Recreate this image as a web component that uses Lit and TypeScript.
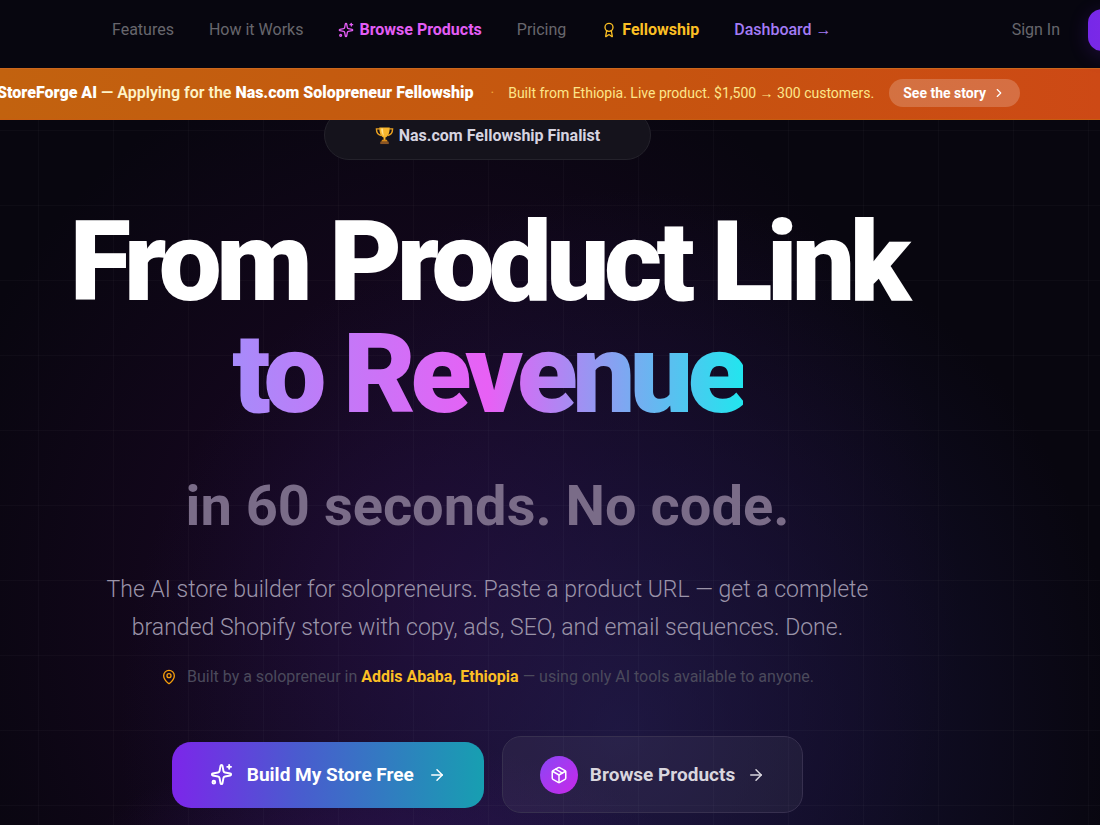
import { LitElement, html, css, svg } from "lit";
import { customElement, property } from "lit/decorators.js";

const ICONS: Record<string, unknown> = {
  sparkles: svg`<path d="M11.017 2.814a1 1 0 0 1 1.966 0l1.051 5.558a2 2 0 0 0 1.594 1.594l5.558 1.051a1 1 0 0 1 0 1.966l-5.558 1.051a2 2 0 0 0-1.594 1.594l-1.051 5.558a1 1 0 0 1-1.966 0l-1.051-5.558a2 2 0 0 0-1.594-1.594l-5.558-1.051a1 1 0 0 1 0-1.966l5.558-1.051a2 2 0 0 0 1.594-1.594z"/><path d="M20 2v4"/><path d="M22 4h-4"/><circle cx="4" cy="20" r="1.400"/>`,
  award: svg`<path d="m15.477 12.89 1.515 8.526a.5.5 0 0 1-.81.47l-3.58-2.687a1 1 0 0 0-1.197 0l-3.586 2.686a.5.5 0 0 1-.81-.469l1.514-8.526"/><circle cx="12" cy="8" r="6"/>`,
  pin: svg`<path d="M20 10c0 4.993-5.539 10.193-7.399 11.799a1 1 0 0 1-1.202 0C9.539 20.193 4 14.993 4 10a8 8 0 0 1 16 0"/><circle cx="12" cy="10" r="3"/>`,
  box: svg`<path d="M11 21.73a2 2 0 0 0 2 0l7-4A2 2 0 0 0 21 16V8a2 2 0 0 0-1-1.73l-7-4a2 2 0 0 0-2 0l-7 4A2 2 0 0 0 3 8v8a2 2 0 0 0 1 1.73z"/><path d="M12 22V12"/><polyline points="3.29 7 12 12 20.71 7"/><path d="m7.5 4.27 9 5.15"/>`,
  arrow: svg`<path d="M5 12h14"/><path d="m12 5 7 7-7 7"/>`,
  chevron: svg`<path d="m9 18 6-6-6-6"/>`,
};

@customElement("line-icon")
class LineIcon extends LitElement {
  @property() name = "";
  static styles = css`
    :host { display: inline-flex; flex: none; width: 16px; height: 16px; }
    svg {
      width: 100%; height: 100%; fill: none; stroke: currentColor;
      stroke-width: 2; stroke-linecap: round; stroke-linejoin: round;
    }
  `;
  render() {
    return html`<svg viewBox="0 0 24 24" aria-hidden="true">${ICONS[this.name]}</svg>`;
  }
}

@customElement("app-root")
class AppRoot extends LitElement {
  static styles = css`
    :host {
      display: block; min-height: 100vh; overflow: hidden;
      background: #07050f; color: #fff;
      font-family: Roboto, "Liberation Sans", sans-serif;
    }
    * { box-sizing: border-box; }
    a { color: inherit; text-decoration: none; white-space: nowrap; }
    header { position: relative; z-index: 1; background: #07060f; }

    .nav {
      display: flex; align-items: center; justify-content: space-between;
      height: 68px; padding: 0 0 8px 112px;
      font-size: 16px; line-height: 24px; color: #67666d;
    }
    .links { display: flex; align-items: center; gap: 35px; }
    .links a { display: flex; align-items: center; gap: 5px; }
    .browse { color: #e35df5; font-weight: 700; }
    .fellow { color: #fbbf24; font-weight: 700; }
    .dash { color: #a37bf5; font-weight: 500; }
    .account { display: flex; align-items: center; gap: 28px; margin-right: -120px; }
    .start {
      width: 132px; height: 42px; border: 0; border-radius: 14px;
      background: linear-gradient(90deg, #7628e8, #a32be0); color: #fff;
      box-shadow: 0 4px 20px rgba(118, 40, 232, .2);
    }

    .banner {
      display: flex; align-items: center; justify-content: flex-end;
      height: 52px; padding: 0 80px 2px 0;
      background: linear-gradient(90deg, #c2620f, #c6540f 60%, #cd4915);
      border-top: 1px solid #cb661c; border-bottom: 1px solid #c85c10;
      white-space: nowrap; color: #fde68a;
      font-size: 14px; line-height: 24px;
    }
    .lead { font-size: 16px; font-weight: 600; color: #fef3c7; }
    .lead strong { font-weight: 900; color: #fff; }
    .dot { margin: 0 14px 0 17px; color: #f0a83c; }
    .story {
      display: flex; align-items: center; gap: 6px; height: 28px;
      margin-left: 15px; padding: 0 14px; border-radius: 14px;
      background: rgba(255, 255, 255, .2); color: #fff; font-weight: 700;
    }

    .hero {
      display: flex; flex-direction: column; align-items: center;
      min-height: calc(100vh - 110px); margin-top: -10px; padding: 0 125px 12px 0;
      text-align: center;
      background:
        linear-gradient(90deg, rgba(255,255,255,.025) 1px, transparent 1px) 38px 0 / 75px 75px,
        linear-gradient(rgba(255,255,255,.025) 1px, transparent 1px) 0 20px / 75px 75px,
        radial-gradient(ellipse 300px 130px at 380px 760px, rgba(70,24,120,.35), transparent),
        radial-gradient(ellipse 500px 540px at 620px 620px, rgba(36,34,88,.6), rgba(30,26,76,.42) 45%, transparent),
        radial-gradient(ellipse 520px 580px at 440px 500px, rgba(54,8,68,.55), rgba(42,8,56,.35) 45%, transparent),
        #08060f;
    }
    .badge {
      display: flex; align-items: center; gap: 5px; height: 50px;
      padding: 0 50px; border: 1px solid #24222b; border-radius: 25px;
      background: #15131c; color: #d6d4e0; font-size: 16px; font-weight: 700;
    }
    .cup { width: 19px; height: 19px; }
    h1 {
      margin: 46px 0 0; font-size: 112px; line-height: 112px;
      font-weight: 900; letter-spacing: -0.05em;
    }
    h1 span { display: block; width: fit-content; margin: 0 auto; white-space: nowrap; }
    .grad {
      background: linear-gradient(90deg, #a78bfa, #e860f5 50%, #22e5ee);
      background-clip: text; -webkit-background-clip: text; color: transparent;
    }
    h2 {
      margin: 44px 0 0; font-size: 56px; line-height: 64px;
      font-weight: 700; color: #7a6c88; white-space: nowrap;
    }
    .pitch {
      max-width: 790px; margin: 33px 0 0; font-size: 23px; line-height: 38px;
      font-weight: 300; color: #9b94a9;
    }
    .origin {
      display: flex; align-items: center; gap: 10px; margin: 17px 0 0;
      font-size: 16px; line-height: 26px; color: #4b4a5c; white-space: nowrap;
    }
    .origin strong { color: #fbbf24; }
    .origin line-icon { color: #f59e0b; }
    .actions { display: flex; align-items: center; gap: 18px; margin-top: 46px; }
    button { font-family: inherit; }
    .cta {
      display: flex; align-items: center; border-radius: 19px; border: 0;
      height: 66px; padding: 0 38px; gap: 14px;
      font-size: 19px; line-height: 24px; font-weight: 700; color: #fff; white-space: nowrap;
      background: linear-gradient(90deg, #7c26ea, #4a5bcf 40%, #179fb1);
    }
    .cta.ghost {
      height: 77px; gap: 12px; padding: 0 37px; border: 1px solid #37304f;
      background: rgba(255, 255, 255, .05); color: #d9d6de;
    }
    .big { width: 23px; height: 23px; }
    .mid { width: 18px; height: 18px; }
    .small { width: 14px; height: 14px; }
    .disc {
      display: grid; place-items: center; width: 38px; height: 38px; border-radius: 50%;
      background: linear-gradient(135deg, #8b46f6, #c828e8); color: #fff;
    }
  `;

  render() {
    return html`
      <header>
        <nav class="nav">
          <div class="links">
            <a href="#features">Features</a>
            <a href="#how">How it Works</a>
            <a class="browse" href="#products"><line-icon name="sparkles"></line-icon>Browse Products</a>
            <a href="#pricing">Pricing</a>
            <a class="fellow" href="#fellowship"><line-icon name="award"></line-icon>Fellowship</a>
            <a class="dash" href="#dashboard">Dashboard →</a>
          </div>
          <div class="account">
            <a href="#signin">Sign In</a>
            <button class="start" aria-label="Get started"></button>
          </div>
        </nav>
        <div class="banner">
          <span class="lead"><strong>StoreForge AI</strong> — Applying for the <strong>Nas.com Solopreneur Fellowship</strong></span>
          <span class="dot">·</span>
          <span>Built from Ethiopia. Live product. $1,500 → 300 customers.</span>
          <a class="story" href="#story">See the story<line-icon class="small" name="chevron"></line-icon></a>
        </div>
      </header>
      <main class="hero">
        <div class="badge">
          <svg class="cup" viewBox="0 0 20 20" aria-hidden="true">
            <path d="M5 3H1.500c0 4 1.500 6.500 5 7M15 3h3.500c0 4-1.500 6.500-5 7" fill="none" stroke="#e9a020" stroke-width="1.500"/>
            <path d="M4.500 1.500h11c0 5-1.500 9.500-4.500 10.500v3H9v-3C6 11 4.500 6.500 4.500 1.500z" fill="#f7b52c"/>
            <path d="M6.500 2.500h2c0 3 .3 5.500 1 8C7.500 9 6.500 6 6.500 2.500z" fill="#ffe08a"/>
            <path d="M7.500 14.500h5l1 2h-7z" fill="#d98a1a"/>
            <path d="M5.500 16.500h9V19h-9z" fill="#8a5424"/>
          </svg>
          Nas.com Fellowship Finalist
        </div>
        <h1><span>From Product Link</span><span class="grad">to Revenue</span></h1>
        <h2>in 60 seconds. No code.</h2>
        <p class="pitch">The AI store builder for solopreneurs. Paste a product URL — get a complete branded Shopify store with copy, ads, SEO, and email sequences. Done.</p>
        <p class="origin">
          <line-icon name="pin"></line-icon>
          <span>Built by a solopreneur in <strong>Addis Ababa, Ethiopia</strong> — using only AI tools available to anyone.</span>
        </p>
        <div class="actions">
          <button class="cta"><line-icon class="big" name="sparkles"></line-icon>Build My Store Free<line-icon class="mid" name="arrow"></line-icon></button>
          <button class="cta ghost"><span class="disc"><line-icon class="mid" name="box"></line-icon></span>Browse Products<line-icon class="mid" name="arrow"></line-icon></button>
        </div>
      </main>
    `;
  }
}
